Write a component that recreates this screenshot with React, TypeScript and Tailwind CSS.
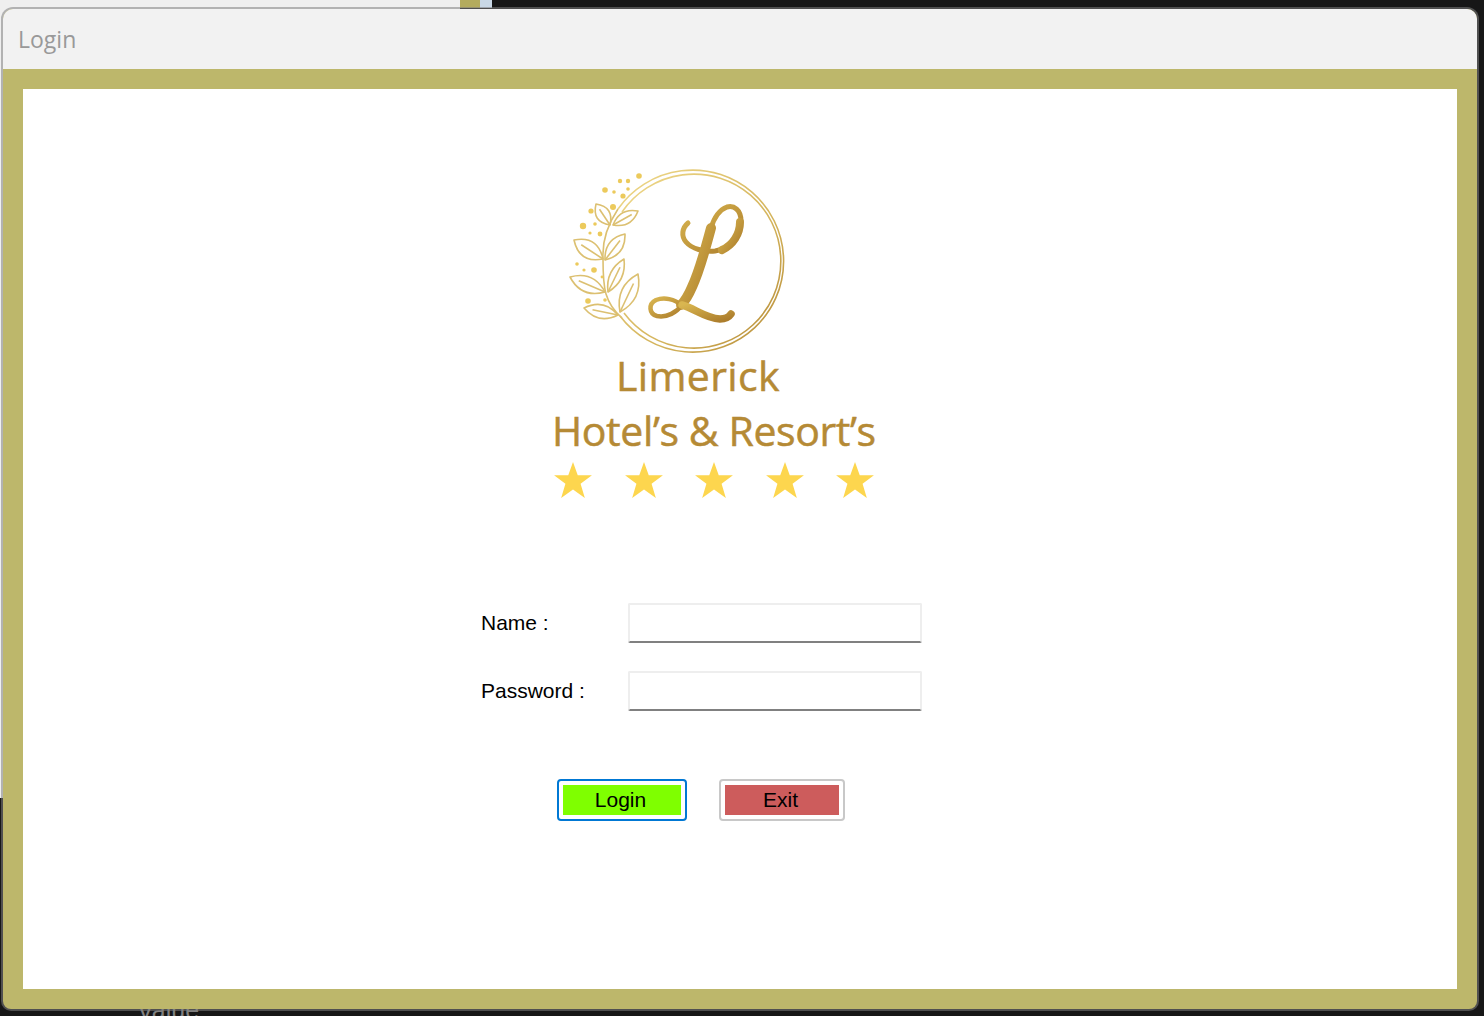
const leaves = [
  { bx: 610, by: 223, tx: 596, ty: 202, w: 8 },
  { bx: 613, by: 223, tx: 638, ty: 209, w: 7 },
  { bx: 603, by: 257, tx: 574, ty: 238, w: 10 },
  { bx: 605, by: 258, tx: 625, ty: 232, w: 8 },
  { bx: 605, by: 290, tx: 570, ty: 275, w: 9 },
  { bx: 608, by: 290, tx: 624, ty: 257, w: 7 },
  { bx: 620, by: 310, tx: 638, ty: 272, w: 9 },
  { bx: 618, by: 313, tx: 584, ty: 306, w: 8 },
];

const dots = [
  [639, 174, 2.8], [628, 179, 2.2], [620, 179, 2.2], [605, 188, 2.8], [614, 190, 1.8], [623, 194, 2.6], [628, 187, 1.8],
  [613, 205, 3], [591, 209, 2.6], [583, 224, 3.2], [595, 222, 1.8], [590, 231, 1.6], [600, 232, 2.4],
  [577, 262, 1.8], [584, 268, 1.6], [594, 268, 2.8], [602, 275, 1.4], [588, 299, 2.8], [605, 298, 1.8],
];

function Leaf({ bx, by, tx, ty, w }: { bx: number; by: number; tx: number; ty: number; w: number }) {
  const mx = (bx + tx) / 2;
  const my = (by + ty) / 2;
  const len = Math.hypot(tx - bx, ty - by);
  const nx = (-(ty - by) / len) * w * 1.7;
  const ny = ((tx - bx) / len) * w * 1.7;
  return (
    <g>
      <path d={`M${bx} ${by}Q${mx + nx} ${my + ny} ${tx} ${ty}Q${mx - nx} ${my - ny} ${bx} ${by}Z`} />
      <path d={`M${bx} ${by}L${mx + (tx - mx) * 0.5} ${my + (ty - my) * 0.5}`} />
    </g>
  );
}

function LogoMark() {
  return (
    <svg width="240" height="186" viewBox="552 160 240 186" fill="none" overflow="visible" className="block">
      <defs>
        <linearGradient id="ring" x1="0" y1="0" x2="1" y2="1">
          <stop offset="0" stopColor="#efd98a" />
          <stop offset="0.6" stopColor="#d4b45c" />
          <stop offset="1" stopColor="#b58a35" />
        </linearGradient>
        <linearGradient id="letter" x1="0" y1="0" x2="1" y2="1">
          <stop offset="0" stopColor="#d9b650" />
          <stop offset="1" stopColor="#ac7d2c" />
        </linearGradient>
      </defs>
      <g stroke="url(#ring)" strokeWidth="1.6">
        <path d="M618 207A91 91 0 1 1 620 314" />
        <path d="M622 210A87 87 0 1 1 624 311" />
      </g>
      <g stroke="#dcc071" strokeWidth="1.6" strokeLinejoin="round">
        <path d="M618 207C608 222 602 240 603 257C603 275 604 285 606 292C609 302 615 310 622 316" />
        {leaves.map((l) => (
          <Leaf key={`${l.tx}-${l.ty}`} {...l} />
        ))}
      </g>
      <g fill="#ecca5c">
        {dots.map(([cx, cy, r]) => (
          <circle key={`${cx}-${cy}`} cx={cx} cy={cy} r={r} />
        ))}
      </g>
      <g stroke="url(#letter)" strokeLinecap="round" strokeLinejoin="round" fill="none">
        <path strokeWidth="5" d="M688 221C682 226 681 234 686 240C692 247 704 250 715 249C730 247 741 235 741 219C741 208 734 203 727 205C719 208 714 216 711 226" />
        <path strokeWidth="8" d="M722 248C733 243 740 232 740 220" />
        <path strokeWidth="10" d="M711 226C705 248 700 268 692 285C689 292 686 298 681 303" />
        <path strokeWidth="4.5" d="M681 303C675 297 664 295 656 298C648 302 649 312 657 314C667 316 677 310 682 303" />
        <path strokeWidth="7.5" d="M682 303C694 306 705 316 720 317C725 317 729 315 731 312" />
      </g>
    </svg>
  );
}

function Star() {
  return (
    <svg width="38" height="36" viewBox="0 0 40 38" className="block">
      <path fill="#fdd64e" d="M20 0l5 14h15L28 23l4.500 15L20 29 7.500 38 12 23 0 14h15z" />
    </svg>
  );
}

function Field({ label }: { label: string }) {
  return (
    <div className="flex items-center">
      <label className="w-[147px] pb-[1px] text-[21px] leading-6 text-black">{label}</label>
      <div className="h-10 w-[294px] rounded-[2px] border-2 border-[#eeeeee] border-b-[#808080] bg-white" />
    </div>
  );
}

export default function App() {
  return (
    <div className="relative h-[1016px] w-[1484px] overflow-hidden bg-[#171717] font-['Liberation_Sans',sans-serif]">
      {/* what sits behind the dialog */}
      <div className="absolute left-0 top-0 h-[798px] w-[460px] bg-[#efefef]" />
      <div className="absolute left-[460px] top-0 h-2 w-5 bg-[#b3ab5e]" />
      <div className="absolute left-[480px] top-0 h-2 w-3 bg-[#c9d8e6]" />
      <span className="absolute left-[137px] top-[996px] text-[25px] leading-7 text-[#808080]">Value</span>

      {/* dialog */}
      <div className="absolute left-[3px] top-[9px] flex h-[1000px] w-[1474px] flex-col overflow-hidden rounded-t-[10px] rounded-b-[8px] bg-[#bdb76b] shadow-[0_0_0_2px_rgba(128,128,128,0.55)]">
        <div className="flex h-[60px] items-center bg-[#f2f2f2] pl-[15px] font-['Open_Sans',sans-serif] text-[23px] text-[#999999]">
          Login
        </div>
        <div className="mx-5 mt-5 h-[900px] w-[1434px] bg-white">
          <div className="ml-[529px] w-[324px] pt-[73px]">
            <LogoMark />
            <div className="font-['Open_Sans',sans-serif] text-[41px] font-medium leading-[55px] whitespace-nowrap text-[#b58a35] [-webkit-text-stroke:0.5px_#b58a35]">
              <div className="pl-[64px] tracking-[0.35px]">Limerick</div>
              <div className="tracking-[-0.4px]">Hotel’s &amp; Resort’s</div>
            </div>
            <div className="ml-[2px] flex w-[320px] justify-between pt-1">
              <Star />
              <Star />
              <Star />
              <Star />
              <Star />
            </div>
          </div>

          <div className="ml-[458px] mt-[105px] flex flex-col gap-7">
            <Field label="Name :" />
            <Field label="Password :" />
          </div>

          <div className="ml-[534px] mt-[68px] flex gap-8 text-[21px] text-black">
            <button className="h-[42px] w-[130px] rounded-[4px] border-2 border-[#0078d4] bg-white p-1">
              <span className="flex h-full items-center justify-center bg-[#7fff00] pr-[3px]">Login</span>
            </button>
            <button className="h-[42px] w-[126px] rounded-[4px] border-2 border-[#c8c8c8] bg-white p-1">
              <span className="flex h-full items-center justify-center bg-[#cd5c5c] pr-[3px]">Exit</span>
            </button>
          </div>
        </div>
      </div>
    </div>
  );
}
